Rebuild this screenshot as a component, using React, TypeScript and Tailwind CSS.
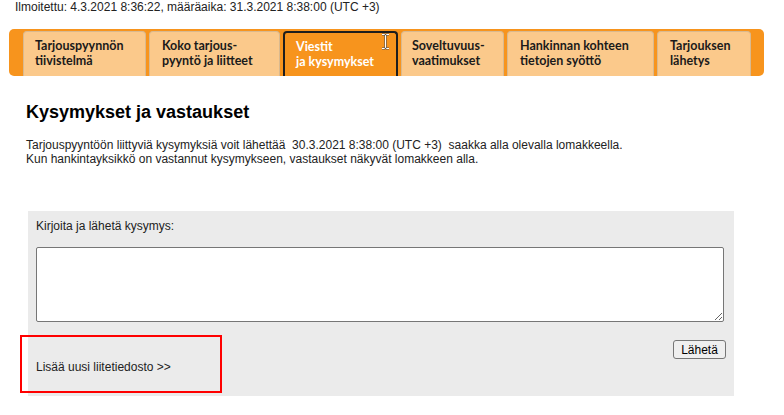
import React from 'react';

const tabs = [
  { lines: ['Tarjouspyynnön', 'tiivistelmä'], w: 'w-[123px]', pl: 'pl-[11px]' },
  { lines: ['Koko tarjous-', 'pyyntö ja liitteet'], w: 'w-[131px]', pl: 'pl-[12px]' },
  { lines: ['Viestit', 'ja kysymykset'], w: 'w-[115px]', pl: 'pl-[11px]', active: true },
  { lines: ['Soveltuvuus-', 'vaatimukset'], w: 'w-[103px]', pl: 'pl-[10px]' },
  { lines: ['Hankinnan kohteen', 'tietojen syöttö'], w: 'w-[147px]', pl: 'pl-[12px]' },
  { lines: ['Tarjouksen', 'lähetys'], w: 'w-[94px]', pl: 'pl-[12px]' },
];

// text cursor hovering the active tab
const IBeam = () => (
  <svg className="absolute left-[381px] top-[33px]" width="9" height="17" viewBox="0 0 9 17">
    <path d="M1 1.5h2.5L4.5 2.5 5.5 1.5H8M4.5 2.5v12M1 15.5h2.5l1-1 1 1H8" fill="none" stroke="#555" strokeWidth="2.2" />
    <path d="M1 1.5h2.5L4.5 2.5 5.5 1.5H8M4.5 2.5v12M1 15.5h2.5l1-1 1 1H8" fill="none" stroke="#fff" strokeWidth="1" />
  </svg>
);

export default function App() {
  return (
    <div className="relative min-h-[415px] w-[784px] bg-white text-[12px] leading-[14px] text-[#222] font-['Liberation_Sans',Arial,sans-serif]">
      <div className="pl-[15px]">Ilmoitettu: 4.3.2021 8:36:22, määräaika: 31.3.2021 8:38:00 (UTC +3)</div>

      {/* tab strip */}
      <div className="ml-[9px] mt-[15px] flex h-[47px] w-[755px] gap-[3px] rounded-[5px] bg-[#f7941d] pl-[14px] pt-[2px]">
        {tabs.map((t) => (
          <div
            key={t.lines[0]}
            className={`${t.w} ${t.pl} h-[45px] rounded-t-[4px] pt-[6px] font-['Lato',sans-serif] text-[12.5px] font-bold leading-[15px] ${
              t.active
                ? 'border-2 border-b-0 border-[#1e1e1e] bg-[#f7941d] pl-[9px] pt-[4px] text-white'
                : 'border border-b-0 border-[#d9b98f] bg-[#fbc98b] text-[#1a1a1a]'
            }`}
          >
            {t.lines.map((l) => (
              <div key={l} className="h-[15px]">{l}</div>
            ))}
          </div>
        ))}
      </div>
      <IBeam />

      <div className="pl-[26px]">
        <h1 className="mt-[26px] text-[18px] font-bold leading-[21px] text-black">Kysymykset ja vastaukset</h1>
        <p className="mt-[15px]">
          Tarjouspyyntöön liittyviä kysymyksiä voit lähettää&nbsp; 30.3.2021 8:38:00 (UTC +3)&nbsp; saakka alla olevalla lomakkeella.
          <br />
          Kun hankintayksikkö on vastannut kysymykseen, vastaukset näkyvät lomakkeen alla.
        </p>
      </div>

      {/* question form */}
      <div className="relative ml-[28px] mt-[45px] h-[185px] w-[706px] bg-[#ebebeb] px-[8px] pt-[8px]">
        <div>Kirjoita ja lähetä kysymys:</div>
        <textarea className="mt-[14px] block h-[75px] w-[688px] resize rounded-[2px] border border-[#767676] bg-white" />
        <div className="mt-[18px] flex justify-end">
          <button className="h-[19px] w-[53px] rounded-[3px] border border-[#767676] bg-[#efefef] text-[12px] leading-[14px] text-black">
            Lähetä
          </button>
        </div>
        <div className="mt-[1px]">Lisää uusi liitetiedosto &gt;&gt;</div>
        <div className="absolute left-[-8px] top-[124px] h-[58px] w-[202px] border-2 border-[#ff0000]" />
      </div>
    </div>
  );
}
